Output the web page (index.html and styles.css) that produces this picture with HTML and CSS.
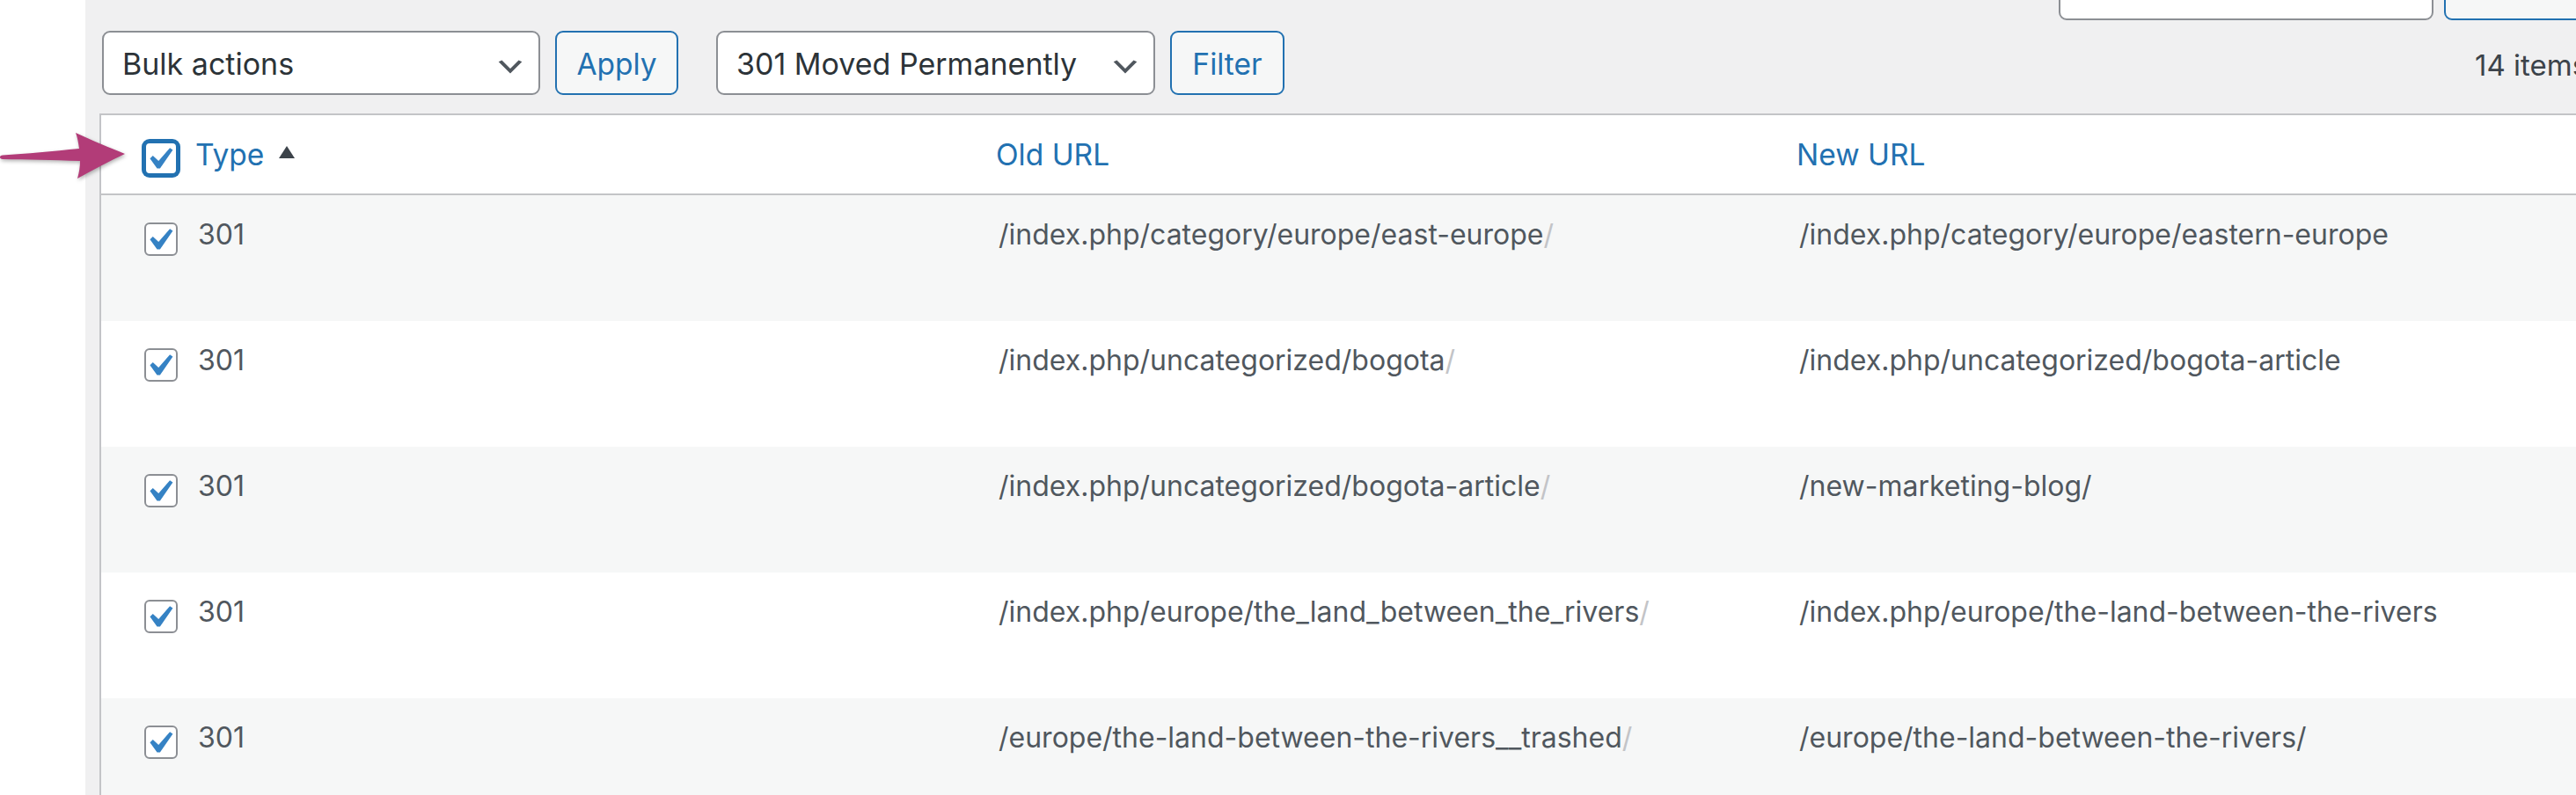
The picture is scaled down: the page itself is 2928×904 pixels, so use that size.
FILE: index.html
```html
<!DOCTYPE html>
<html lang="en">
<head>
<meta charset="utf-8">
<title>Redirects</title>
<link rel="stylesheet" href="styles.css">
</head>
<body>
<div class="screen">
  <aside class="sidebar"></aside>
  <main class="wrap">
    <div class="search-box">
      <div class="search-input"></div>
      <div class="button search-button"></div>
    </div>
    <div class="tablenav">
      <div class="select bulk">
        <span>Bulk actions</span>
        <svg class="chevron" viewBox="0 0 20 20"><path d="M5 6l5 5 5-5 2 1-7 7-7-7 2-1z"/></svg>
      </div>
      <div class="button apply">Apply</div>
      <div class="select status">
        <span>301 Moved Permanently</span>
        <svg class="chevron" viewBox="0 0 20 20"><path d="M5 6l5 5 5-5 2 1-7 7-7-7 2-1z"/></svg>
      </div>
      <div class="button filter">Filter</div>
      <span class="displaying-num">14 items</span>
    </div>
    <table class="list">
      <colgroup>
        <col class="c-check">
        <col class="c-type">
        <col class="c-old">
        <col class="c-new">
      </colgroup>
      <thead>
        <tr>
          <th class="check"><span class="cb focus"><svg viewBox="0 0 20 20"><path d="M14.83 4.89l1.34.94-5.81 8.38H9.02L5.78 9.67l1.34-1.25 2.57 2.4z"/></svg></span></th>
          <th><a class="col-link">Type</a><span class="sort-ind"></span></th>
          <th><a class="col-link">Old URL</a></th>
          <th><a class="col-link">New URL</a></th>
        </tr>
      </thead>
      <tbody>
        <tr>
          <td class="check"><span class="cb"><svg viewBox="0 0 20 20"><path d="M14.83 4.89l1.34.94-5.81 8.38H9.02L5.78 9.67l1.34-1.25 2.57 2.4z"/></svg></span></td>
          <td>301</td>
          <td>/index.php/category/europe/east-europe<span class="slash">/</span></td>
          <td>/index.php/category/europe/eastern-europe</td>
        </tr>
        <tr>
          <td class="check"><span class="cb"><svg viewBox="0 0 20 20"><path d="M14.83 4.89l1.34.94-5.81 8.38H9.02L5.78 9.67l1.34-1.25 2.57 2.4z"/></svg></span></td>
          <td>301</td>
          <td>/index.php/uncategorized/bogota<span class="slash">/</span></td>
          <td>/index.php/uncategorized/bogota-article</td>
        </tr>
        <tr>
          <td class="check"><span class="cb"><svg viewBox="0 0 20 20"><path d="M14.83 4.89l1.34.94-5.81 8.38H9.02L5.78 9.67l1.34-1.25 2.57 2.4z"/></svg></span></td>
          <td>301</td>
          <td>/index.php/uncategorized/bogota-article<span class="slash">/</span></td>
          <td>/new-marketing-blog/</td>
        </tr>
        <tr>
          <td class="check"><span class="cb"><svg viewBox="0 0 20 20"><path d="M14.83 4.89l1.34.94-5.81 8.38H9.02L5.78 9.67l1.34-1.25 2.57 2.4z"/></svg></span></td>
          <td>301</td>
          <td>/index.php/europe/the_land_between_the_rivers<span class="slash">/</span></td>
          <td>/index.php/europe/the-land-between-the-rivers</td>
        </tr>
        <tr>
          <td class="check"><span class="cb"><svg viewBox="0 0 20 20"><path d="M14.83 4.89l1.34.94-5.81 8.38H9.02L5.78 9.67l1.34-1.25 2.57 2.4z"/></svg></span></td>
          <td>301</td>
          <td>/europe/the-land-between-the-rivers__trashed<span class="slash">/</span></td>
          <td>/europe/the-land-between-the-rivers/</td>
        </tr>
      </tbody>
    </table>
  </main>
  <svg class="pointer-arrow" viewBox="0 0 150 75">
    <path d="M3 36.5 C30 35 60 32 90 29 C89 22 88 16 86 11 C105 20 125 28 142 35 C125 43 106 53 88 63 C90 56 91 49 91 43 C60 42 30 41.5 3 41 C1 41 0 40 0 38.75 C0 37.5 1 36.5 3 36.5 Z"/>
  </svg>
</div>
</body>
</html>
```

FILE: styles.css
```css
html, body {
  margin: 0;
  padding: 0;
  width: 2928px;
  height: 904px;
  overflow: hidden;
  background: #ffffff;
}

body {
  font-family: Inter, "Noto Sans", "Liberation Sans", sans-serif;
  color: #3c434a;
}

.screen {
  position: relative;
  display: flex;
  height: 904px;
}

.sidebar {
  flex: none;
  width: 97px;
  background: #ffffff;
}

.wrap {
  flex: none;
  width: 2871px;
  box-sizing: border-box;
  padding: 0 15px 0 16px;
  background: #f0f0f1;
}

/* search box, mostly scrolled out of view */
.search-box {
  display: flex;
  justify-content: flex-end;
  align-items: flex-end;
  gap: 12px;
  height: 23px;
  overflow: hidden;
}

.search-input {
  flex: none;
  width: 426px;
  height: 72px;
  box-sizing: border-box;
  border: 2px solid #8c8f94;
  border-radius: 9px;
  background: #ffffff;
}

.search-button {
  flex: none;
  width: 175px;
  height: 72px;
}

/* tablenav */
.tablenav {
  display: flex;
  align-items: center;
  height: 73px;
  margin: 12px 0 21px;
  padding-left: 3px;
}

.select {
  flex: none;
  display: flex;
  align-items: center;
  justify-content: space-between;
  height: 73px;
  box-sizing: border-box;
  padding: 2px 13px 0 21px;
  border: 2px solid #8c8f94;
  border-radius: 9px;
  background: #ffffff;
  color: #2c3338;
  font-size: 34px;
}

.select.bulk { width: 498px; }
.select.status { width: 499px; margin-left: 43px; }

.chevron {
  width: 38px;
  height: 38px;
  margin-top: 7px;
  fill: #50575e;
}

.button {
  flex: none;
  display: flex;
  align-items: center;
  justify-content: center;
  height: 73px;
  box-sizing: border-box;
  padding-top: 2px;
  border: 2px solid #2271b1;
  border-radius: 9px;
  background: #f6f7f7;
  color: #2271b1;
  font-size: 33.5px;
}

.button.apply { width: 140px; margin-left: 17px; }
.button.filter { width: 130px; margin-left: 17px; }

.displaying-num {
  flex: none;
  width: 140px;
  margin-left: auto;
  padding-top: 4px;
  font-size: 33px;
  color: #3c434a;
  white-space: nowrap;
}

/* list table */
.list {
  width: 100%;
  table-layout: fixed;
  border-collapse: separate;
  border-spacing: 0;
  border: 2px solid #c3c4c7;
  background: #ffffff;
}

.c-check { width: 85px; }
.c-type { width: 910px; }
.c-old { width: 910px; }

.list th {
  padding: 23px 0 21px 22px;
  border-bottom: 2px solid #c3c4c7;
  font-size: 33.5px;
  font-weight: 400;
  line-height: 45px;
  text-align: left;
  vertical-align: top;
  white-space: nowrap;
}

.list th.check {
  padding: 30px 0 0 49px;
}

.col-link {
  color: #2271b1;
  text-decoration: none;
}

.sort-ind {
  display: inline-block;
  width: 0;
  height: 0;
  margin: 0 0 8px 17px;
  border-left: 9.5px solid transparent;
  border-right: 9.5px solid transparent;
  border-bottom: 14px solid #3c434a;
}

.list td {
  padding: 22px 0 76px 25px;
  font-size: 32px;
  line-height: 45px;
  color: #50575e;
  vertical-align: top;
  white-space: nowrap;
}

.list td.check {
  padding: 31px 0 0 49px;
}

.list tbody tr:nth-child(odd) {
  background: #f6f7f7;
}

.slash {
  color: #c3c4c7;
}

/* checkboxes */
.cb {
  position: relative;
  display: block;
  width: 38px;
  height: 38px;
  box-sizing: border-box;
  border: 2px solid #8c8f94;
  border-radius: 6px;
  background: #ffffff;
}

.cb svg {
  position: absolute;
  left: -9.6px;
  top: -7.2px;
  width: 50px;
  height: 50px;
  fill: #3582c4;
}

.cb.focus {
  border-color: #2271b1;
  box-shadow: 0 0 0 3px #2271b1;
}

/* annotation arrow */
.pointer-arrow {
  position: absolute;
  left: 0;
  top: 140px;
  width: 150px;
  height: 75px;
  overflow: visible;
  fill: #b23c78;
  filter: drop-shadow(1px 2px 2px rgba(0, 0, 0, 0.3));
}
```
